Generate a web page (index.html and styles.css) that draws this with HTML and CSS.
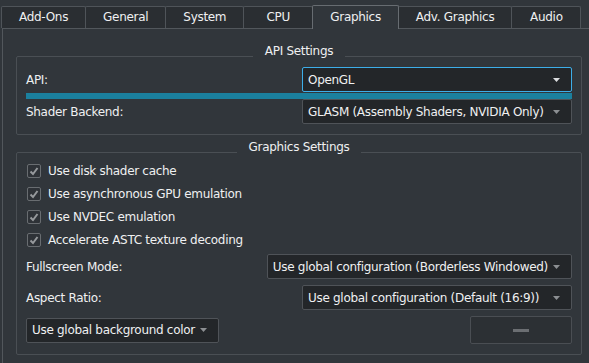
FILE: index.html
```html
<!DOCTYPE html>
<html lang="en">
  <head>
    <meta charset="UTF-8" />
    <title>Graphics Settings</title>
    <link rel="stylesheet" href="styles.css">
  </head>
  <body>
    <div class="window">
      <div class="tabs">
        <div class="tab">Add-Ons</div>
        <div class="tab">General</div>
        <div class="tab">System</div>
        <div class="tab">CPU</div>
        <div class="tab active">Graphics</div>
        <div class="tab">Adv. Graphics</div>
        <div class="tab">Audio</div>
      </div>

      <div class="pane">
        <fieldset class="group api">
          <legend>API Settings</legend>
          <div class="row first">
            <span>API:</span>
            <div class="combo focus">
              <span class="combo-text">OpenGL</span>
              <svg class="arrow" width="7" height="4" viewBox="0 0 7 4"><path d="M0 0h7L3.5 4z" /></svg>
            </div>
          </div>
          <div class="highlight"></div>
          <div class="row">
            <span>Shader Backend:</span>
            <div class="combo">
              <span class="combo-text">GLASM (Assembly Shaders, NVIDIA Only)</span>
              <svg class="arrow" width="7" height="4" viewBox="0 0 7 4"><path d="M0 0h7L3.5 4z" /></svg>
            </div>
          </div>
        </fieldset>

        <fieldset class="group graphics">
          <legend>Graphics Settings</legend>
          <div class="checks">
            <label class="check">
              <span class="box"><svg width="12" height="12" viewBox="0 0 12 12"><path d="M2.5 6.5l2.5 2.5 4.5-6" /></svg></span>
              Use disk shader cache
            </label>
            <label class="check">
              <span class="box"><svg width="12" height="12" viewBox="0 0 12 12"><path d="M2.5 6.5l2.5 2.5 4.5-6" /></svg></span>
              Use asynchronous GPU emulation
            </label>
            <label class="check">
              <span class="box"><svg width="12" height="12" viewBox="0 0 12 12"><path d="M2.5 6.5l2.5 2.5 4.5-6" /></svg></span>
              Use NVDEC emulation
            </label>
            <label class="check">
              <span class="box"><svg width="12" height="12" viewBox="0 0 12 12"><path d="M2.5 6.5l2.5 2.5 4.5-6" /></svg></span>
              Accelerate ASTC texture decoding
            </label>
          </div>

          <div class="row fullscreen">
            <span>Fullscreen Mode:</span>
            <div class="combo">
              <span class="combo-text">Use global configuration (Borderless Windowed)</span>
              <svg class="arrow" width="7" height="4" viewBox="0 0 7 4"><path d="M0 0h7L3.5 4z" /></svg>
            </div>
          </div>

          <div class="row aspect">
            <span>Aspect Ratio:</span>
            <div class="combo">
              <span class="combo-text">Use global configuration (Default (16:9))</span>
              <svg class="arrow" width="7" height="4" viewBox="0 0 7 4"><path d="M0 0h7L3.5 4z" /></svg>
            </div>
          </div>

          <div class="row bg-row">
            <div class="combo small">
              <span class="combo-text">Use global background color</span>
              <svg class="arrow" width="7" height="4" viewBox="0 0 7 4"><path d="M0 0h7L3.5 4z" /></svg>
            </div>
            <button class="color-btn"><span class="dash"></span></button>
          </div>
        </fieldset>
      </div>
    </div>
  </body>
</html>
```

FILE: styles.css
```css
body {
  margin: 0;
  background: #31363b;
  color: #eff0f1;
  font-family: "DejaVu Sans", sans-serif;
  font-size: 12px;
  letter-spacing: -0.3px;
  overflow: hidden;
}
.window {
  width: 600px;
}
.tabs {
  display: flex;
  align-items: flex-end;
  height: 28px;
  padding-left: 1px;
}
.tab {
  box-sizing: border-box;
  height: 22px;
  line-height: 20px;
  min-width: 70px;
  padding: 0 17px;
  margin-left: -1px;
  text-align: center;
  white-space: nowrap;
  background: #2a2e32;
  border: 1px solid #4f5459;
  border-bottom: none;
  border-radius: 2px 2px 0 0;
}
.tab:first-child {
  margin-left: 0;
}
.tab.active {
  height: 24px;
  line-height: 22px;
  margin-bottom: -1px;
  background: #31363b;
  border-color: #676c71;
  position: relative;
  z-index: 1;
}
.pane {
  box-sizing: border-box;
  width: 594px;
  margin-left: 2px;
  padding: 15px 13px 20px;
  border: 1px solid #52575c;
}
.group {
  margin: 0;
  padding: 0 9px 10px;
  min-width: 0;
  border: 1px solid #4a4f54;
  border-radius: 2px;
}
.group legend {
  margin: 0 auto;
  padding: 0 12px 10px;
  line-height: 14px;
}
.graphics {
  margin-top: 5px;
  padding-bottom: 10px;
}
.row {
  display: flex;
  justify-content: space-between;
  align-items: center;
}
.row.first {
  margin-top: -1px;
}
.combo {
  box-sizing: border-box;
  display: flex;
  align-items: center;
  height: 25px;
  min-width: 270px;
  padding: 0 11px 0 5px;
  background: #232629;
  border: 1px solid #4f5358;
  border-radius: 2px;
}
.combo.small {
  min-width: 0;
}
.combo-text {
  flex: 1;
  white-space: nowrap;
  margin-right: 5px;
}
.arrow {
  fill: #8c8f92;
}
.combo.focus {
  border-color: #3daee9;
}
.combo.focus .arrow {
  fill: #dcdee0;
}
.highlight {
  height: 6px;
  margin-top: 1px;
  background: #1b809e;
}
.checks {
  display: flex;
  flex-direction: column;
  gap: 9px;
}
.check {
  display: flex;
  align-items: center;
  gap: 7px;
  height: 14px;
  padding-left: 1px;
}
.box {
  box-sizing: border-box;
  display: flex;
  align-items: center;
  justify-content: center;
  width: 14px;
  height: 14px;
  border: 1px solid #696d71;
  border-radius: 2px;
  background: #2e3237;
}
.box path {
  fill: none;
  stroke: #96999c;
  stroke-width: 2;
}
.fullscreen {
  margin-top: 7px;
}
.aspect,
.bg-row {
  margin-top: 6px;
}
.color-btn {
  display: flex;
  align-items: center;
  justify-content: center;
  width: 102px;
  height: 28px;
  padding: 0;
  background: #2c3034;
  border: 1px solid #4a4e53;
  border-radius: 2px;
}
.dash {
  width: 16px;
  height: 3px;
  background: #6b6e72;
}
```
